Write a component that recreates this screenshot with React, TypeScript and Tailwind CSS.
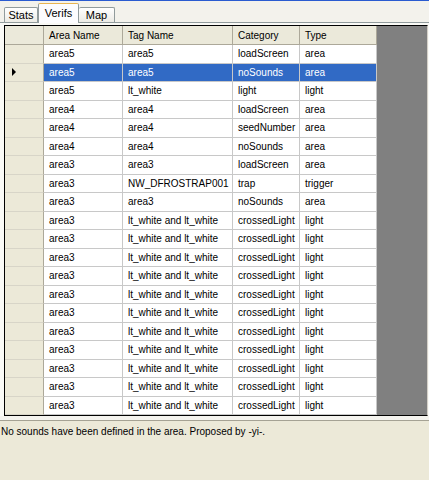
const rows = [
  ['area5', 'area5', 'loadScreen', 'area'],
  ['area5', 'area5', 'noSounds', 'area'],
  ['area5', 'lt_white', 'light', 'light'],
  ['area4', 'area4', 'loadScreen', 'area'],
  ['area4', 'area4', 'seedNumber', 'area'],
  ['area4', 'area4', 'noSounds', 'area'],
  ['area3', 'area3', 'loadScreen', 'area'],
  ['area3', 'NW_DFROSTRAP001', 'trap', 'trigger'],
  ['area3', 'area3', 'noSounds', 'area'],
  ...Array.from({ length: 11 }, () => ['area3', 'lt_white and lt_white', 'crossedLight', 'light']),
];

const widths = ['w-[79px]', 'w-[110px]', 'w-[67px]', 'w-[77px]'];
const headers = ['Area Name', 'Tag Name', 'Category', 'Type'];
const selected = 1;

export default function App() {
  return (
    <div
      className="w-[429px] h-[480px] bg-[#ECE9D8] flex flex-col overflow-hidden text-black"
      style={{ fontFamily: '"Liberation Sans", Arial, sans-serif' }}
    >
      <div className="h-px bg-[#2a5bd0]" />
      {/* tabs */}
      <div className="h-[22px] flex items-end pl-[4px] bg-[#F3F2EC] border-b border-[#919B9C] text-[11px]">
        <div className="w-[34px] h-[15px] border border-b-0 border-[#919B9C] rounded-t-[2px] bg-gradient-to-b from-white to-[#ECEBE5] flex items-center justify-center">
          Stats
        </div>
        <div className="w-[41px] h-[20px] -mb-px border border-b-0 border-[#919B9C] border-t-[#E8B450] rounded-t-[2px] bg-[#FCFCFE] flex items-center justify-center relative z-10">
          Verifs
        </div>
        <div className="w-[36px] h-[15px] border border-b-0 border-l-0 border-[#919B9C] rounded-t-[2px] bg-gradient-to-b from-white to-[#ECEBE5] flex items-center justify-center">
          Map
        </div>
      </div>
      {/* grid */}
      <div className="pt-[2px] pl-[4px] pr-[1px] bg-[#FAFAF6]">
        <div className="flex flex-col border-l border-t border-b border-black border-r border-r-[#D4D0C8] bg-[#808080] text-[10px]">
          <div className="flex h-[19px]">
            <div className="w-[39px] shrink-0 bg-[#EBE9DA] border-r border-b border-[#ACA899]" />
            {headers.map((h, i) => (
              <div
                key={h}
                className={`${widths[i]} shrink-0 bg-[#EBE9DA] border-r border-b border-[#ACA899] pl-[5px] flex items-center`}
              >
                {h}
              </div>
            ))}
          </div>
          {rows.map((r, ri) => {
            const sel = ri === selected;
            return (
              <div key={ri} className="flex h-[18.5px]">
                <div className="w-[39px] shrink-0 bg-[#ECE9D8] border-r border-[#ACA899] border-b border-b-[#D8D5C8] flex items-center pl-[7px]">
                  {sel && (
                    <div className="w-0 h-0 border-y-[4px] border-y-transparent border-l-[4px] border-l-black" />
                  )}
                </div>
                {r.map((c, ci) => (
                  <div
                    key={ci}
                    className={`${widths[ci]} shrink-0 border-r border-b border-[#C8C8C8] pl-[5px] flex items-center whitespace-nowrap overflow-hidden ${
                      sel ? 'bg-[#316AC5] text-white' : 'bg-white'
                    }`}
                  >
                    {c}
                  </div>
                ))}
              </div>
            );
          })}
        </div>
      </div>
      {/* status */}
      <div className="h-[4px] bg-[#F4F3EE]" />
      <div className="h-px bg-[#A5A294]" />
      <div className="flex-1 pt-[4px] pl-[1px] text-[10px] leading-[14px]">
        No sounds have been defined in the area. Proposed by -yi-.
      </div>
    </div>
  );
}
